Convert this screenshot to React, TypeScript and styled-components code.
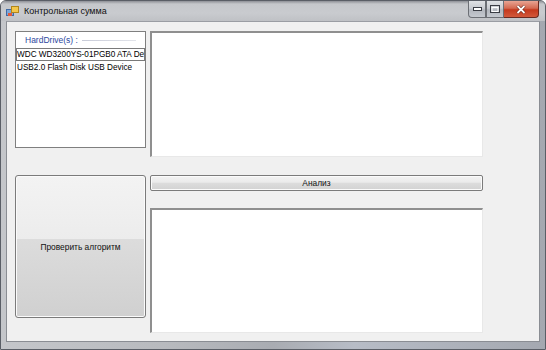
import React from "react";
import styled, { createGlobalStyle } from "styled-components";

const Global = createGlobalStyle`
  html, body { margin: 0; padding: 0; background: #ffffff; }
  body { font-family: "Liberation Sans", Arial, sans-serif; }
  * { box-sizing: border-box; }
`;

const Window = styled.div`
  width: 546px;
  height: 350px;
  display: flex;
  flex-direction: column;
  padding: 0 5px 7px 5px;
  background: linear-gradient(90deg, #c4c6ca 0%, #b8babe 30%, #a9acb2 50%, #b7bcc6 65%, #a4a8b0 100%);
  border: 1px solid #5a5e66;
  border-radius: 6px 6px 0 0;
  overflow: hidden;
`;

const TitleBar = styled.div`
  height: 20px;
  display: flex;
  align-items: center;
  margin: 0 -5px;
  padding-left: 5px;
  background: linear-gradient(180deg, #8e9096 0px, #c5c7cb 3px, #c9cbcf 60%, #bfc1c5 100%);
`;

const AppIcon = styled.svg`
  width: 13px;
  height: 13px;
  flex: none;
  margin-right: 5px;
`;

const Title = styled.span`
  font-family: "Liberation Sans", Arial, sans-serif;
  font-size: 9px;
  color: #101010;
  flex: 1;
`;

const CaptionGroup = styled.div`
  display: flex;
  flex: none;
  align-self: flex-start;
  margin-right: 6px;
  height: 17px;
`;

const CaptionButton = styled.div<{ $close?: boolean }>`
  width: ${(p) => (p.$close ? 35 : 18)}px;
  flex: none;
  height: 17px;
  display: flex;
  align-items: center;
  justify-content: center;
  border: 1px solid ${(p) => (p.$close ? "#6a2a20" : "#6c6f75")};
  border-top: none;
  border-left: ${(p) => (p.$close ? "none" : "1px solid #6c6f75")};
  background: ${(p) =>
    p.$close
      ? "linear-gradient(180deg, #e8a493 0%, #d46a52 45%, #c4391d 55%, #d2583a 100%)"
      : "linear-gradient(180deg, #dfe1e4 0%, #c9ccd1 45%, #b3b7be 55%, #c5c9cf 100%)"};
  border-radius: ${(p) => (p.$close ? "0 0 4px 0" : "0")};
  &:first-child { border-radius: 0 0 0 4px; }
`;

const Client = styled.div`
  flex: 1;
  background: #f0f0f0;
  border: 1px solid #8a8d93;
  border-top-color: #9a9da3;
  display: flex;
  gap: 4px;
  padding: 9px 0 0 8px;
`;

const Column = styled.div<{ $width: number }>`
  width: ${(p) => p.$width}px;
  display: flex;
  flex-direction: column;
`;

const ListBox = styled.div`
  height: 117px;
  background: #ffffff;
  border: 1px solid #7f7f7f;
  overflow: hidden;
  font-size: 8px;
  color: #000;
`;

const GroupHeader = styled.div`
  height: 16px;
  display: flex;
  align-items: center;
  padding: 0 9px 0 9px;
  gap: 4px;
  color: #2c48a0;
  font-size: 8.5px;
`;

const HeaderLine = styled.div`
  flex: 1;
  height: 1px;
  background: linear-gradient(90deg, #c8cbd8, #e2e4ea);
`;

const ListItem = styled.div<{ $focused?: boolean }>`
  height: 13px;
  line-height: 11px;
  padding-left: 0;
  white-space: nowrap;
  overflow: hidden;
  border: 1px ${(p) => (p.$focused ? "solid #7a7a7a" : "solid transparent")};
  font-size: 8.2px;
`;

const TextArea = styled.div<{ $height: number }>`
  height: ${(p) => p.$height}px;
  background: #ffffff;
  border-style: solid;
  border-width: 2px 1px 1px 2px;
  border-color: #8f8f8f #e8e8e8 #e8e8e8 #8f8f8f;
`;

const BigButton = styled.button`
  height: 143px;
  margin-top: 27px;
  border: 1px solid #7b7b7b;
  border-radius: 3px;
  background: linear-gradient(180deg, #f3f3f3 0%, #ececec 45%, #dcdcdc 45%, #d0d0d0 100%);
  font-family: "Liberation Sans", Arial, sans-serif;
  font-size: 8.4px;
  color: #111;
  padding: 0;
  box-shadow: inset 0 0 0 1px #fbfbfb;
`;

const SmallButton = styled.button`
  height: 16px;
  margin: 18px 0 17px 0;
  border: 1px solid #7b7b7b;
  border-radius: 2px;
  background: linear-gradient(180deg, #f3f3f3 0%, #ebebeb 45%, #dddddd 50%, #d2d2d2 100%);
  font-family: "Liberation Sans", Arial, sans-serif;
  font-size: 8.4px;
  color: #111;
  padding: 0;
  box-shadow: inset 0 0 0 1px #fbfbfb;
`;

export default function App() {
  return (
    <>
      <Global />
      <Window>
        <TitleBar>
          <AppIcon viewBox="0 0 13 13">
            <rect x="0.5" y="4.5" width="7" height="6" fill="#7ea7d8" stroke="#3f6aa6" />
            <rect x="5.5" y="1.5" width="7" height="6" fill="#f3c74c" stroke="#b2861b" />
            <rect x="2" y="8" width="4" height="3" fill="#e25b3c" />
          </AppIcon>
          <Title>Контрольная сумма</Title>
          <CaptionGroup>
            <CaptionButton>
              <svg width="9" height="4" viewBox="0 0 9 4">
                <rect x="0.5" y="0.5" width="8" height="3" fill="#fff" stroke="#3a3d44" />
              </svg>
            </CaptionButton>
            <CaptionButton>
              <svg width="10" height="8" viewBox="0 0 10 8">
                <rect x="0.5" y="0.5" width="9" height="7" fill="none" stroke="#3a3d44" />
                <rect x="2" y="2.5" width="6" height="4" fill="none" stroke="#fff" />
              </svg>
            </CaptionButton>
            <CaptionButton $close>
              <svg width="10" height="9" viewBox="0 0 10 9">
                <path d="M1.5 1 L8.5 8 M8.5 1 L1.5 8" stroke="#5a1a10" strokeWidth="3" />
                <path d="M1.5 1 L8.5 8 M8.5 1 L1.5 8" stroke="#ffffff" strokeWidth="1.8" />
              </svg>
            </CaptionButton>
          </CaptionGroup>
        </TitleBar>
        <Client>
          <Column $width={131}>
            <ListBox>
              <GroupHeader>
                <span>HardDrive(s) :</span>
                <HeaderLine />
              </GroupHeader>
              <ListItem $focused>WDC WD3200YS-01PGB0 ATA Dev</ListItem>
              <ListItem>USB2.0 Flash Disk USB Device</ListItem>
            </ListBox>
            <BigButton>Проверить алгоритм</BigButton>
          </Column>
          <Column $width={333}>
            <TextArea $height={126} />
            <SmallButton>Анализ</SmallButton>
            <TextArea $height={125} />
          </Column>
        </Client>
      </Window>
    </>
  );
}
